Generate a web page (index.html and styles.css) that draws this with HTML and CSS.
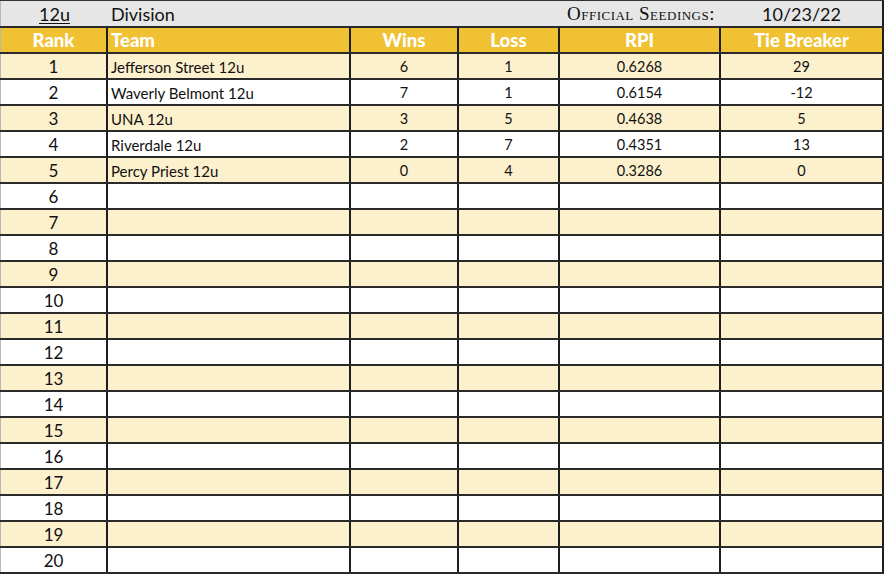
FILE: index.html
```html
<!DOCTYPE html>
<html>
<head>
<meta charset="utf-8">
<link rel="stylesheet" href="styles.css">
</head>
<body>
<div class="sheet">
  <div class="row title">
    <div class="cell c1"><span class="u">12u</span></div>
    <div class="cell c2 left">Division</div>
    <div class="cell c345"><span class="official">Official Seedings:</span></div>
    <div class="cell c6 date">10/23/22</div>
  </div>
  <div class="row head">
    <div class="cell c1">Rank</div>
    <div class="cell c2 left">Team</div>
    <div class="cell c3">Wins</div>
    <div class="cell c4">Loss</div>
    <div class="cell c5">RPI</div>
    <div class="cell c6">Tie Breaker</div>
  </div>
  <div class="row odd"><div class="cell c1 rank">1</div><div class="cell c2 left team">Jefferson Street 12u</div><div class="cell c3 num">6</div><div class="cell c4 num">1</div><div class="cell c5 num">0.6268</div><div class="cell c6 num">29</div></div>
  <div class="row"><div class="cell c1 rank">2</div><div class="cell c2 left team">Waverly Belmont 12u</div><div class="cell c3 num">7</div><div class="cell c4 num">1</div><div class="cell c5 num">0.6154</div><div class="cell c6 num">-12</div></div>
  <div class="row odd"><div class="cell c1 rank">3</div><div class="cell c2 left team">UNA 12u</div><div class="cell c3 num">3</div><div class="cell c4 num">5</div><div class="cell c5 num">0.4638</div><div class="cell c6 num">5</div></div>
  <div class="row"><div class="cell c1 rank">4</div><div class="cell c2 left team">Riverdale 12u</div><div class="cell c3 num">2</div><div class="cell c4 num">7</div><div class="cell c5 num">0.4351</div><div class="cell c6 num">13</div></div>
  <div class="row odd"><div class="cell c1 rank">5</div><div class="cell c2 left team">Percy Priest 12u</div><div class="cell c3 num">0</div><div class="cell c4 num">4</div><div class="cell c5 num">0.3286</div><div class="cell c6 num">0</div></div>
  <div class="row"><div class="cell c1 rank">6</div><div class="cell c2"></div><div class="cell c3"></div><div class="cell c4"></div><div class="cell c5"></div><div class="cell c6"></div></div>
  <div class="row odd"><div class="cell c1 rank">7</div><div class="cell c2"></div><div class="cell c3"></div><div class="cell c4"></div><div class="cell c5"></div><div class="cell c6"></div></div>
  <div class="row"><div class="cell c1 rank">8</div><div class="cell c2"></div><div class="cell c3"></div><div class="cell c4"></div><div class="cell c5"></div><div class="cell c6"></div></div>
  <div class="row odd"><div class="cell c1 rank">9</div><div class="cell c2"></div><div class="cell c3"></div><div class="cell c4"></div><div class="cell c5"></div><div class="cell c6"></div></div>
  <div class="row"><div class="cell c1 rank">10</div><div class="cell c2"></div><div class="cell c3"></div><div class="cell c4"></div><div class="cell c5"></div><div class="cell c6"></div></div>
  <div class="row odd"><div class="cell c1 rank">11</div><div class="cell c2"></div><div class="cell c3"></div><div class="cell c4"></div><div class="cell c5"></div><div class="cell c6"></div></div>
  <div class="row"><div class="cell c1 rank">12</div><div class="cell c2"></div><div class="cell c3"></div><div class="cell c4"></div><div class="cell c5"></div><div class="cell c6"></div></div>
  <div class="row odd"><div class="cell c1 rank">13</div><div class="cell c2"></div><div class="cell c3"></div><div class="cell c4"></div><div class="cell c5"></div><div class="cell c6"></div></div>
  <div class="row"><div class="cell c1 rank">14</div><div class="cell c2"></div><div class="cell c3"></div><div class="cell c4"></div><div class="cell c5"></div><div class="cell c6"></div></div>
  <div class="row odd"><div class="cell c1 rank">15</div><div class="cell c2"></div><div class="cell c3"></div><div class="cell c4"></div><div class="cell c5"></div><div class="cell c6"></div></div>
  <div class="row"><div class="cell c1 rank">16</div><div class="cell c2"></div><div class="cell c3"></div><div class="cell c4"></div><div class="cell c5"></div><div class="cell c6"></div></div>
  <div class="row odd"><div class="cell c1 rank">17</div><div class="cell c2"></div><div class="cell c3"></div><div class="cell c4"></div><div class="cell c5"></div><div class="cell c6"></div></div>
  <div class="row"><div class="cell c1 rank">18</div><div class="cell c2"></div><div class="cell c3"></div><div class="cell c4"></div><div class="cell c5"></div><div class="cell c6"></div></div>
  <div class="row odd"><div class="cell c1 rank">19</div><div class="cell c2"></div><div class="cell c3"></div><div class="cell c4"></div><div class="cell c5"></div><div class="cell c6"></div></div>
  <div class="row"><div class="cell c1 rank">20</div><div class="cell c2"></div><div class="cell c3"></div><div class="cell c4"></div><div class="cell c5"></div><div class="cell c6"></div></div>
</div>
</body>
</html>
```
FILE: styles.css
```css
* { box-sizing: border-box; }
html, body { margin: 0; padding: 0; background: #ffffff; }
body { font-family: Lato, "Open Sans", sans-serif; color: #111; }
.sheet { width: 884px; }
.row {
  display: flex;
  height: 26px;
  border-bottom: 2px solid #2a2a2a;
  background: #ffffff;
}
.row.odd { background: #fcf0cd; }
.cell {
  display: flex;
  align-items: center;
  justify-content: center;
  border-right: 2px solid #1e1e1e;
  white-space: nowrap;
  overflow: hidden;
}
.cell.left { justify-content: flex-start; padding-left: 3px; }
.c1 { width: 108px; border-left: 1px solid #b8b8b8; }
.c2 { width: 243px; }
.c3 { width: 108px; }
.c4 { width: 101px; }
.c5 { width: 161px; }
.c6 { width: 163px; }
.c345 { width: 370px; justify-content: flex-end; padding-right: 6px; }

.title {
  height: 28px;
  border-top: 1px solid #333;
  background: #e6e6e6;
  font-size: 18px;
}
.title .cell { border-right: none; }
.title .c1 { border-left: 1px solid #b8b8b8; }
.title .c6 { border-right: 2px solid #1e1e1e; }
.u { text-decoration: underline; text-underline-offset: 2px; }
.official {
  font-family: "Liberation Serif", serif;
  font-variant: small-caps;
  font-size: 19px;
  letter-spacing: 0.5px;
}
.date { font-size: 18px; }

.head {
  background: #f0c132;
  color: #ffffff;
  font-weight: 900;
  font-size: 18.5px;
}
.rank { font-size: 17px; }
.team { font-size: 15px; padding-top: 1px; }
.num { font-size: 14.5px; padding-top: 1px; }
```
